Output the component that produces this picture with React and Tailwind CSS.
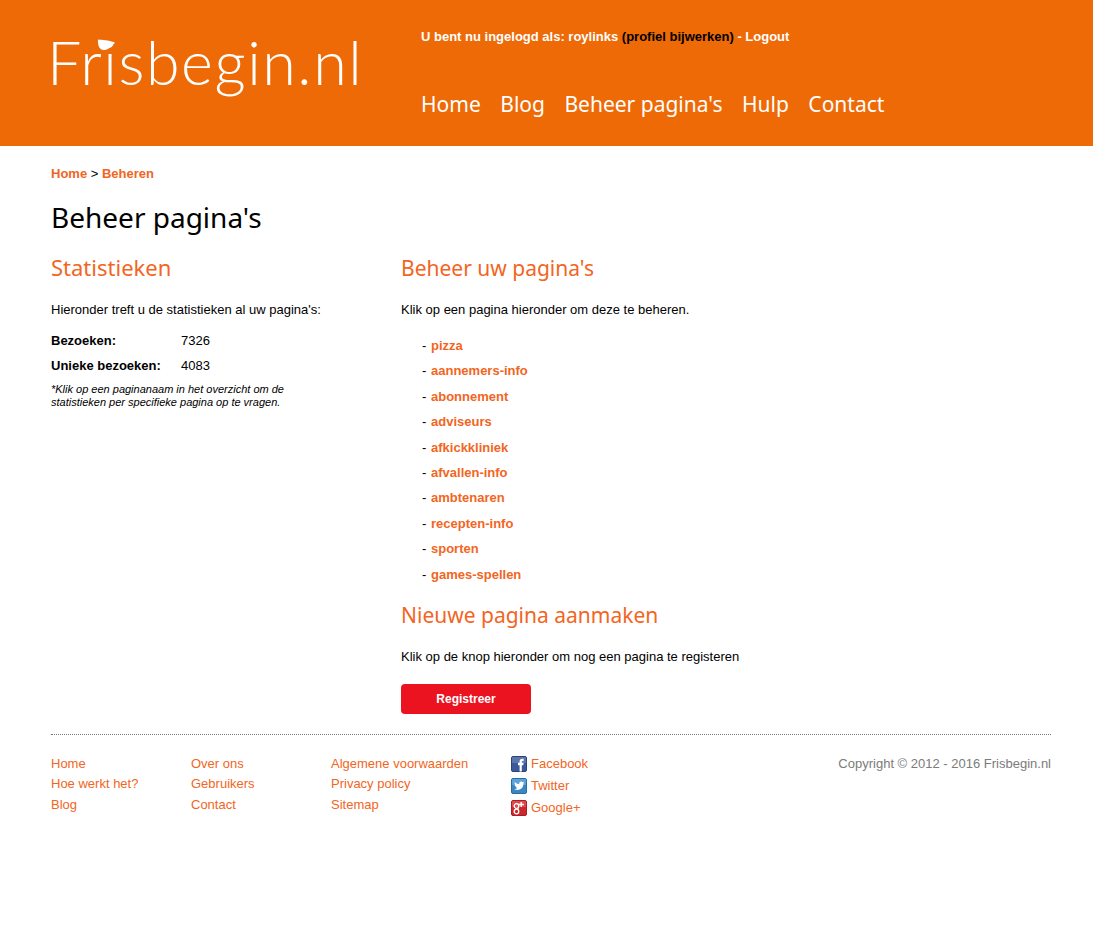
const ORANGE = "text-[#f26522]";

const pages = ["pizza", "aannemers-info", "abonnement", "adviseurs", "afkickkliniek", "afvallen-info", "ambtenaren", "recepten-info", "sporten", "games-spellen"];
const navItems = ["Home", "Blog", "Beheer pagina's", "Hulp", "Contact"];
const heading = "font-['Noto_Sans',sans-serif]";

function FacebookIcon() {
  return (
    <svg width="16" height="16" viewBox="0 0 16 16" className="shrink-0">
      <rect x=".5" y=".5" width="15" height="15" rx="1.5" fill="#3b5998" stroke="#2d4373" />
      <rect x="1" y="1" width="14" height="6" rx="1" fill="#5a76ae" />
      <path d="M8.6 15.500V9.200H7V6.800h1.600V5.400C8.600 3.600 9.600 2.700 11.200 2.700h1.400v2.200h-.9c-.7 0-.9.300-.9.900v1h1.800l-.3 2.400h-1.500v6.300z" fill="#fff" />
    </svg>
  );
}

function TwitterIcon() {
  return (
    <svg width="16" height="16" viewBox="0 0 16 16" className="shrink-0">
      <rect x=".5" y=".5" width="15" height="15" rx="1.500" fill="#3a87c4" stroke="#2c6d9f" />
      <rect x="1" y="1" width="14" height="6" rx="1" fill="#5ba3da" />
      <path d="M13.400 4.600c-.4.200-.8.300-1.200.3.400-.3.800-.7.900-1.100-.4.200-.9.400-1.300.5a2.100 2.100 0 0 0-3.600 1.900C6.500 6.100 5 5.300 3.900 4c-.6 1-.3 2.200.6 2.800-.3 0-.6-.1-.9-.3 0 1 .7 1.900 1.700 2.100-.3.100-.6.100-.9 0 .3.900 1.100 1.400 2 1.500A4.200 4.200 0 0 1 3.200 11c3.800 2.200 9.300.3 9.200-5.500.4-.3.700-.6 1-.9z" fill="#fff" />
    </svg>
  );
}

function GoogleIcon() {
  return (
    <svg width="16" height="16" viewBox="0 0 16 16" className="shrink-0">
      <rect x=".5" y=".5" width="15" height="15" rx="1.500" fill="#c9282d" stroke="#a81e22" />
      <rect x="1" y="1" width="14" height="6" rx="1" fill="#dd4b4f" />
      <circle cx="5.500" cy="6" r="2.300" fill="none" stroke="#fff" strokeWidth="1.300" />
      <circle cx="5.500" cy="11.500" r="2.300" fill="none" stroke="#fff" strokeWidth="1.300" />
      <path d="M7 8.200v1.400M10.200 2v5M7.800 4.500h5" stroke="#fff" strokeWidth="1.400" fill="none" />
    </svg>
  );
}

export default function App() {
  return (
    <div className="min-h-[926px] bg-white font-['Liberation_Sans',Arial,sans-serif] text-[13px] text-black">
      {/* Header */}
      <header className="h-[146px] bg-[#ee6a06]">
        <div className="ml-[51px] flex w-[1000px]">
          <div className="relative w-[370px] pt-[23px]">
            <div className="-ml-[4px] font-['Lato',sans-serif] text-[61px] font-light leading-[78px] tracking-[1.55px] text-white">Frisbegin.nl</div>
            <svg width="22" height="14" viewBox="0 0 22 14" className="absolute left-[43px] top-[37px]">
              <path d="M0 .5 4 2.500C8 3 14 3 21 5.500 18 10 13 13.500 9 13 5 12.500 3.500 7 4 2.500Z" fill="#fff" />
            </svg>
          </div>
          <div className="pt-[29px]">
            <p className="h-[16px] leading-[16px] font-bold text-white">
              U bent nu ingelogd als: roylinks <span className="text-black">(profiel bijwerken)</span> - Logout
            </p>
            <nav className={`${heading} mt-[43px] flex gap-[19.5px] text-[21px] leading-[32px] text-white`}>
              {navItems.map((item) => (
                <a key={item} href="#">{item}</a>
              ))}
            </nav>
          </div>
        </div>
      </header>

      <main className="ml-[51px] w-[1000px]">
        <div className="pt-[20px] leading-[15px] font-bold">
          <a href="#" className={ORANGE}>Home</a> <span className="font-normal">&gt;</span> <a href="#" className={ORANGE}>Beheren</a>
        </div>
        <h1 className={`${heading} mt-[16px] text-[28px] leading-[40px]`}>Beheer pagina's</h1>

        <div className="mt-[15px] flex">
          {/* Statistieken */}
          <section className="w-[350px]">
            <h2 className={`${heading} text-[22px] leading-[30px] ${ORANGE}`}>Statistieken</h2>
            <p className="mt-[20px] leading-[16px]">Hieronder treft u de statistieken al uw pagina's:</p>
            <div className="mt-[15px] flex leading-[16px]">
              <strong className="w-[130px]">Bezoeken:</strong>
              <span>7326</span>
            </div>
            <div className="mt-[9px] flex leading-[16px]">
              <strong className="w-[130px]">Unieke bezoeken:</strong>
              <span>4083</span>
            </div>
            <p className="mt-[9px] text-[11px] italic leading-[13px]">
              *Klik op een paginanaam in het overzicht om de<br />statistieken per specifieke pagina op te vragen.
            </p>
          </section>

          {/* Pagina's */}
          <section>
            <h2 className={`${heading} text-[21px] leading-[32px] ${ORANGE}`}>Beheer uw pagina's</h2>
            <p className="mt-[18px] leading-[16px]">Klik op een pagina hieronder om deze te beheren.</p>
            <ul className="mt-[20px] flex flex-col gap-[9.4px] pl-[21px]">
              {pages.map((page) => (
                <li key={page} className="flex leading-[16px]">
                  <span className="w-[9px]">-</span>
                  <a href="#" className={`font-bold ${ORANGE}`}>{page}</a>
                </li>
              ))}
            </ul>
            <h2 className={`${heading} mt-[16px] text-[21px] leading-[32px] ${ORANGE}`}>Nieuwe pagina aanmaken</h2>
            <p className="mt-[18px] leading-[16px]">Klik op de knop hieronder om nog een pagina te registeren</p>
            <button className="mt-[19px] h-[30px] w-[130px] rounded-[4px] bg-[#ec1320] text-[12px] font-bold text-white">Registreer</button>
          </section>
        </div>

        {/* Footer */}
        <footer className={`mt-[20px] flex border-t border-dotted border-[#777] pt-[19px] ${ORANGE}`}>
          <ul className="w-[140px] leading-[20.5px]">
            <li>Home</li>
            <li>Hoe werkt het?</li>
            <li>Blog</li>
          </ul>
          <ul className="w-[140px] leading-[20.5px]">
            <li>Over ons</li>
            <li>Gebruikers</li>
            <li>Contact</li>
          </ul>
          <ul className="w-[180px] leading-[20.5px]">
            <li>Algemene voorwaarden</li>
            <li>Privacy policy</li>
            <li>Sitemap</li>
          </ul>
          <ul className="mt-[2px] flex flex-col gap-[6px] leading-[16px]">
            <li className="flex items-start gap-[4px]"><FacebookIcon />Facebook</li>
            <li className="flex items-start gap-[4px]"><TwitterIcon />Twitter</li>
            <li className="flex items-start gap-[4px]"><GoogleIcon />Google+</li>
          </ul>
          <p className="ml-auto text-[#7b7b7b] leading-[20px]">Copyright © 2012 - 2016 Frisbegin.nl</p>
        </footer>
      </main>
    </div>
  );
}
